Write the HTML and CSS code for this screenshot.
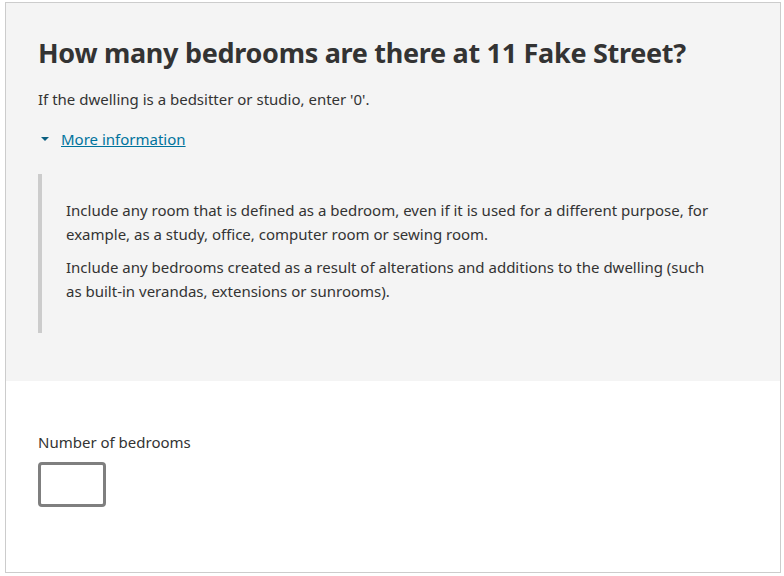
FILE: index.html
```html
<!DOCTYPE html>
<html lang="en">
<head>
	<meta charset="UTF-8">
	<title>Bedrooms</title>
	<link rel="stylesheet" href="styles.css">
</head>
<body>
	<div class="page">
		<div class="question">
			<h1 class="title">How many bedrooms are there at 11 Fake Street?</h1>
			<p class="hint">If the dwelling is a bedsitter or studio, enter '0'.</p>
			<div class="details">
				<a class="toggle" href="#">
					<span class="caret"></span>
					<span class="toggleText">More information</span>
				</a>
				<div class="panel">
					<p>Include any room that is defined as a bedroom, even if it is used for a different purpose, for example, as a study, office, computer room or sewing room.</p>
					<p>Include any bedrooms created as a result of alterations and additions to the dwelling (such as built-in verandas, extensions or sunrooms).</p>
				</div>
			</div>
		</div>
		<div class="answer">
			<label class="label" for="bedrooms">Number of bedrooms</label>
			<input class="field" type="text" id="bedrooms">
		</div>
	</div>
</body>
</html>
```

FILE: styles.css
```css
html, body {
	margin: 0;
	padding: 0;
	background: #fff;
}
body {
	font-family: "Noto Sans", "Open Sans", sans-serif;
	font-size: 15px;
	color: #333;
}
.page {
	margin: 2px 3px 0 5px;
	height: 569px;
	border: 1px solid #ccc;
	display: flex;
	flex-direction: column;
}
.question {
	background: #f4f4f4;
	padding: 32px 32px 48px 32px;
	height: 378px;
	box-sizing: border-box;
}
.title {
	font-size: 27px;
	font-weight: bold;
	letter-spacing: -0.3px;
	line-height: 36px;
	margin: 0 0 16px 0;
}
.hint {
	margin: 0 0 16px 0;
	line-height: 24px;
}
.toggle {
	display: flex;
	align-items: center;
	gap: 12px;
	color: #00739d;
	text-decoration: none;
	line-height: 24px;
}
.caret {
	width: 0;
	height: 0;
	margin-left: 3px;
	border-left: 4px solid transparent;
	border-right: 4px solid transparent;
	border-top: 4px solid #0a5f80;
}
.toggleText {
	text-decoration: underline;
}
.panel {
	margin-top: 23px;
	border-left: 4px solid #ccc;
	padding: 24px 24px 30px 24px;
}
.panel p {
	margin: 0 0 9px 0;
	line-height: 24px;
	max-width: 650px;
}
.panel p:last-child {
	margin-bottom: 0;
}
.answer {
	flex: 1;
	padding: 49px 32px 0 32px;
	display: flex;
	flex-direction: column;
	align-items: flex-start;
}
.label {
	line-height: 24px;
	margin-bottom: 8px;
}
.field {
	width: 68px;
	height: 45px;
	box-sizing: border-box;
	border: 3px solid #7f7f7f;
	border-radius: 4px;
	background: #fff;
	margin: 0;
}
```
